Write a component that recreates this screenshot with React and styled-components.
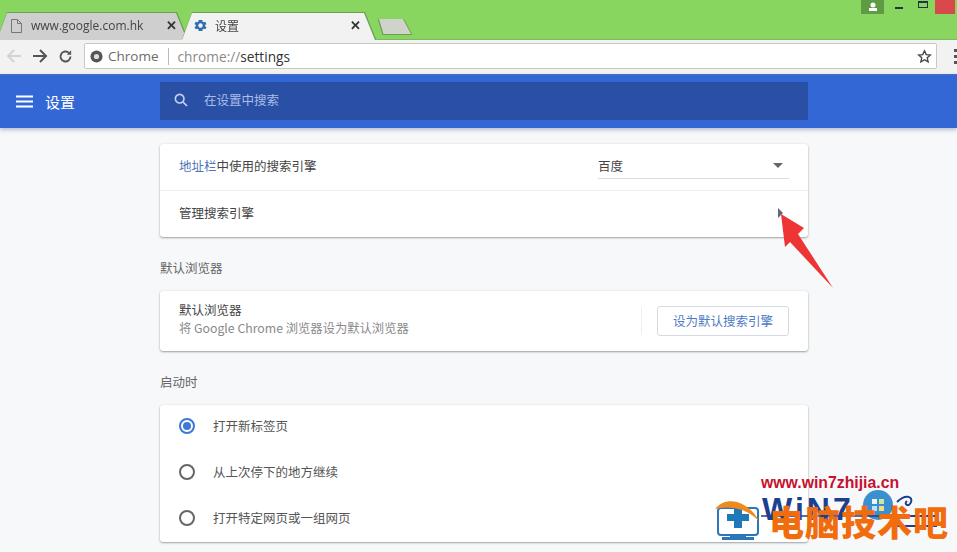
import React from "react";
import styled, { createGlobalStyle } from "styled-components";

const Global = createGlobalStyle`
  html, body { margin: 0; padding: 0; background: #f7f8fa; }
  body { font-family: "Roboto", "Noto Sans CJK SC", sans-serif; }
  * { box-sizing: border-box; }
`;
const Page = styled.div`
  position: relative; width: 957px; height: 552px; overflow: hidden;
  display: flex; flex-direction: column; background: #f7f8fa;
`;
const TabStrip = styled.div`
  position: relative; height: 40px; background: #88d65f; display: flex; align-items: flex-end;
  flex: none; border-bottom: 1px solid #7fb864;
`;
const TabWrap = styled.div`
  margin-left: ${p => p.$ml}px; margin-bottom: -1px; position: relative;
  z-index: ${p => p.$active ? 2 : 1}; flex: none;
  filter: drop-shadow(0 -1px 0 #6d9f56) drop-shadow(1px 0 0 #6d9f56);
`;
const TabShape = styled.div`
  height: 27px; width: ${p => p.$w}px;
  display: flex; align-items: center; padding: 0 ${p => p.$pr}px 2px ${p => p.$pl}px;
  background: ${p => p.$active ? "#f2f2f2" : "#cfcfcf"};
  clip-path: polygon(0 100%, 10px 0, calc(100% - 11px) 0, 100% 100%);
`;
const TabTitle = styled.span`
  flex: 1; font: 12px "Open Sans", "Noto Sans CJK SC", sans-serif; color: #444;
  white-space: nowrap;
`;
const TabIconSlot = styled.span`
  display: flex; width: 15px; height: 16px; margin-right: 7px; align-items: center; justify-content: center;
`;
const TabClose = styled.span`
  font: bold 13px "Liberation Sans", sans-serif; color: #333; line-height: 1;
`;
const NewTabWrap = styled.div`
  margin: 0 0 5px 4px; flex: none;
  filter: drop-shadow(0 1px 0 #6d9f56) drop-shadow(-1px 0 0 #6d9f56) drop-shadow(1px 0 0 #6d9f56);
`;
const NewTab = styled.div`
  width: 32px; height: 15px; background: #cfd3cb;
  clip-path: polygon(0 0, 75% 0, 100% 100%, 14% 100%);
`;
const WindowControls = styled.div`
  position: absolute; top: 0; left: 861px; display: flex; align-items: flex-start;
`;
const Avatar = styled.div`
  width: 23px; height: 14px; background: #5f9a45; display: flex; align-items: center; justify-content: center;
`;
const MinBtn = styled.div`
  width: 8px; height: 2px; background: #234; margin: 7px 0 0 11px;
`;
const MaxBtn = styled.div`
  width: 10px; height: 7px; border: 1px solid #234; border-top-width: 2px; margin: 1px 0 0 15px;
`;
const CloseBtn = styled.div`
  width: 20px; height: 14px; background: #d9484a; margin-left: 7px;
`;
const Toolbar = styled.div`
  height: 34px; background: #f2f2f2; display: flex; align-items: center; flex: none; padding: 0 0 2px 6px;
`;
const NavIcons = styled.div`
  display: flex; align-items: center; gap: 10px; width: 78px; flex: none;
`;
const Omnibox = styled.div`
  width: 853px; height: 26px; background: #fff; border: 1px solid #c9c9c0; border-radius: 2px;
  display: flex; align-items: center; padding: 0 4px 0 5px; flex: none;
`;
const Origin = styled.span`
  font: 13.5px "Open Sans", sans-serif; color: #6b6b6b; margin-left: 5px; padding-right: 9px;
  border-right: 1px solid #bbb; line-height: 17px;
`;
const Url = styled.span`
  font: 13.7px "Open Sans", sans-serif; color: #8a8a8a; margin-left: 9px; flex: 1;
  b { font-weight: 400; color: #333; }
`;
const Kebab = styled.div`
  margin-left: 17px; display: flex; flex-direction: column; gap: 3px; flex: none;
  i { width: 3px; height: 3px; background: #555; display: block; }
`;
const Header = styled.header`
  position: relative; z-index: 3; height: 54px; flex: none; background: #3367d6;
  border-top: 1px solid #4a6fb8; display: flex; align-items: center;
  box-shadow: 0 2px 4px rgba(60,80,140,.35);
`;
const Brand = styled.div`
  width: 160px; flex: none; display: flex; align-items: center; padding-left: 16px; gap: 12px;
  color: #fff; font-size: 15px; font-family: "Noto Sans CJK SC", sans-serif;
`;
const SearchBar = styled.div`
  width: 648px; height: 38px; margin-top: -2px; background: #2a50a6; display: flex; align-items: center;
  padding: 0 0 2px 13px; gap: 15px; color: #a9bde6; font: 12.5px "Noto Sans CJK SC", sans-serif;
`;
const Main = styled.main`
  flex: 1; overflow: hidden; display: flex; flex-direction: column; padding: 16px 0 0 160px;
`;
const Content = styled.div`
  width: 648px; display: flex; flex-direction: column;
`;
const SectionTitle = styled.div`
  font: 12.5px/16px "Noto Sans CJK SC", sans-serif; color: #666; height: 16px; margin: 23px 0 15px;
`;
const Card = styled.section`
  background: #fff; border-radius: 3px;
  box-shadow: 0 1px 2px rgba(60,64,67,.45), 0 0 3px rgba(60,64,67,.08);
`;
const Row = styled.div`
  height: ${p => p.$h || 46}px; display: flex; align-items: center; padding: 0 19px ${p => p.$pb ?? 3}px;
  border-top: ${p => p.$divider ? "1px solid #eeeeee" : "none"};
  font: 12.5px "Noto Sans CJK SC", sans-serif; color: #444;
`;
const RowLabel = styled.div`
  flex: 1; a { color: #4f73b8; text-decoration: none; }
`;
const Select = styled.div`
  width: 191px; height: 25px; border-bottom: 1px solid #ddd; display: flex; align-items: center;
  justify-content: space-between; margin-top: 1px; padding: 0 6px 0 0;
`;
const Caret = styled.span`
  width: 0; height: 0; border-left: 5px solid transparent; border-right: 5px solid transparent;
  border-top: 5px solid #666;
`;
const SubArrow = styled.span`
  width: 0; height: 0; border-top: 5px solid transparent; border-bottom: 5px solid transparent;
  border-left: 5px solid #667; margin-right: 6px;
`;
const Stack = styled.div`
  flex: 1; line-height: 19px;
`;
const Secondary = styled.div`
  color: #8a8a8a; font-size: 12.3px;
`;
const VLine = styled.div`
  width: 1px; height: 28px; background: #eee; margin: 5px 15px 0 0;
`;
const OutlineButton = styled.button`
  width: 132px; height: 30px; border: 1px solid #d6dbe3; border-radius: 3px; background: #fff;
  color: #4f7ac4; font: 12.5px "Noto Sans CJK SC", sans-serif; padding: 0 0 2px; margin-top: 5px;
`;
const RadioRow = styled.div`
  height: 46px; display: flex; align-items: center; padding: 0 0 4px 19px; gap: 18px;
  font: 12.5px "Noto Sans CJK SC", sans-serif; color: #555;
  &:last-child { height: 45px; padding-bottom: 3px; }
`;
const Radio = styled.span`
  width: 16px; height: 16px; border-radius: 50%; border: 2px solid ${p => p.$on ? "#3b78d8" : "#666"};
  display: flex; align-items: center; justify-content: center; flex: none;
  &::after { content: ""; width: 8px; height: 8px; border-radius: 50%; background: ${p => p.$on ? "#3b78d8" : "transparent"}; }
`;
const RadioLabel = styled.span`
  padding-bottom: 2px;
`;
const RedArrow = styled.svg`
  position: absolute; left: 778px; top: 214px; z-index: 5;
`;
const Watermark = styled.div`
  position: absolute; left: 715px; top: 474px; width: 242px; height: 78px; z-index: 6;
`;
const WmUrl = styled.div`
  position: absolute; left: 46px; top: 0; font: bold 15.8px "Liberation Sans", sans-serif; color: #c8102e;
  white-space: nowrap;
`;
const WmWin = styled.div`
  position: absolute; left: 47px; top: 18px; font: 900 32px/34px "Liberation Sans", sans-serif; color: #1d3f8f;
  letter-spacing: 3px;
`;
const WmOrange = styled.div`
  position: absolute; left: 54px; top: 25px; font: 900 35px/44px "Noto Sans CJK SC", sans-serif; color: #f06c0c;
  white-space: nowrap; letter-spacing: 1px;
`;
const WmArt = styled.svg`
  position: absolute; left: 0; top: 0;
`;

const Gear = () => (
  <svg width="15" height="15" viewBox="0 0 24 24"><path fill="#2f6fb0" d="M19.4 13a7.5 7.5 0 0 0 0-2l2.1-1.6-2-3.5-2.5 1a7.6 7.6 0 0 0-1.7-1L15 3.2h-6l-.4 2.700a7.600 7.600 0 0 0-1.700 1l-2.500-1-2 3.500L4.500 11a7.500 7.500 0 0 0 0 2l-2.100 1.600 2 3.500 2.500-1a7.600 7.600 0 0 0 1.700 1l.4 2.700h6l.4-2.700a7.600 7.600 0 0 0 1.700-1l2.500 1 2-3.500zM12 15.500a3.500 3.500 0 1 1 0-7 3.500 3.500 0 0 1 0 7z"/></svg>
);
const Doc = () => (
  <svg width="11" height="14" viewBox="0 0 11 14"><path fill="none" stroke="#777" d="M.5.5h6l4 4v9H.5zM6.500.5v4h4"/></svg>
);

export default function App() {
  return (
    <Page>
      <Global />
      <TabStrip>
        <TabWrap $ml={-3}>
          <TabShape $w={190} $pl={12} $pr={10}>
            <TabIconSlot><Doc /></TabIconSlot>
            <TabTitle>www.google.com.hk</TabTitle>
            <TabClose>✕</TabClose>
          </TabShape>
        </TabWrap>
        <TabWrap $active $ml={-5}>
          <TabShape $active $w={193} $pl={11} $pr={14}>
            <TabIconSlot><Gear /></TabIconSlot>
            <TabTitle>设置</TabTitle>
            <TabClose>✕</TabClose>
          </TabShape>
        </TabWrap>
        <NewTabWrap><NewTab /></NewTabWrap>
        <WindowControls>
          <Avatar>
            <svg width="10" height="10" viewBox="0 0 10 10"><circle cx="5" cy="3" r="2.500" fill="#fff"/><rect x="1" y="6" width="8" height="3" fill="#fff"/></svg>
          </Avatar>
          <MinBtn />
          <MaxBtn />
          <CloseBtn />
        </WindowControls>
      </TabStrip>
      <Toolbar>
        <NavIcons>
          <svg width="16" height="14" viewBox="0 0 16 14"><path d="M8 1 2 7l6 6M2 7h13" fill="none" stroke="#d2d2d2" strokeWidth="2"/></svg>
          <svg width="16" height="14" viewBox="0 0 16 14"><path d="m8 1 6 6-6 6M14 7H1" fill="none" stroke="#555" strokeWidth="2"/></svg>
          <svg width="15" height="15" viewBox="0 0 24 24"><path d="M20 12a8 8 0 1 1-2.300-5.700" fill="none" stroke="#555" strokeWidth="3"/><path d="M21 2v7h-7z" fill="#555"/></svg>
        </NavIcons>
        <Omnibox>
          <svg width="13" height="13" viewBox="0 0 14 14"><circle cx="7" cy="7" r="6.500" fill="#555"/><circle cx="7" cy="7" r="2.800" fill="#ddd"/></svg>
          <Origin>Chrome</Origin>
          <Url>chrome://<b>settings</b></Url>
          <svg width="15" height="15" viewBox="0 0 24 24"><path d="m12 3 2.800 6 6.500.7-4.900 4.400 1.400 6.400L12 17.200 6.200 20.500l1.400-6.400-4.900-4.400 6.500-.7z" fill="none" stroke="#444" strokeWidth="2.200"/></svg>
        </Omnibox>
        <Kebab><i /><i /><i /></Kebab>
      </Toolbar>
      <Header>
        <Brand>
          <svg width="17" height="13" viewBox="0 0 17 13"><path d="M0 1.500h17M0 6.500h17M0 11.500h17" stroke="#fff" strokeWidth="2"/></svg>
          设置
        </Brand>
        <SearchBar>
          <svg width="16" height="16" viewBox="0 0 24 24"><circle cx="10" cy="10" r="6.500" fill="none" stroke="#c4d3f0" strokeWidth="2.400"/><path d="m15 15 6 6" stroke="#c4d3f0" strokeWidth="2.600"/></svg>
          在设置中搜索
        </SearchBar>
      </Header>
      <Main>
        <Content>
          <Card>
            <Row>
              <RowLabel><a>地址栏</a>中使用的搜索引擎</RowLabel>
              <Select>百度<Caret /></Select>
            </Row>
            <Row $divider $h={47}>
              <RowLabel>管理搜索引擎</RowLabel>
              <SubArrow />
            </Row>
          </Card>
          <SectionTitle>默认浏览器</SectionTitle>
          <Card>
            <Row $h={60} $pb={5}>
              <Stack>
                默认浏览器
                <Secondary>将 Google Chrome 浏览器设为默认浏览器</Secondary>
              </Stack>
              <VLine />
              <OutlineButton>设为默认搜索引擎</OutlineButton>
            </Row>
          </Card>
          <SectionTitle>启动时</SectionTitle>
          <Card>
            <RadioRow><Radio $on /><RadioLabel>打开新标签页</RadioLabel></RadioRow>
            <RadioRow><Radio /><RadioLabel>从上次停下的地方继续</RadioLabel></RadioRow>
            <RadioRow><Radio /><RadioLabel>打开特定网页或一组网页</RadioLabel></RadioRow>
          </Card>
        </Content>
      </Main>
      <RedArrow width="60" height="80" viewBox="0 0 60 80">
        <path d="M3 0 L26 14 L20 20 L55 74 L12 28 L7 33 Z" fill="#ee3535" />
      </RedArrow>
      <Watermark>
        <WmUrl>www.win7zhijia.cn</WmUrl>
        <WmWin>WiN7</WmWin>
        <WmArt width="242" height="78" viewBox="0 0 242 78">
          <circle cx="163" cy="31" r="15" fill="#3a8fd0" />
          <rect x="157" y="25" width="5" height="5" fill="#e9f4fb" />
          <rect x="164" y="25" width="5" height="5" fill="#cfe8a0" />
          <rect x="157" y="32" width="5" height="5" fill="#bfe0f5" />
          <rect x="164" y="32" width="5" height="5" fill="#f5dc80" />
          <path d="M182 28c8-8 16-6 14 0s-8 2-4-1M180 42h42M172 52h50" fill="none" stroke="#1d3f8f" strokeWidth="2" />
          <path d="M46 42h130" stroke="#1d3f8f" strokeWidth="1.500" />
          <rect x="3" y="34" width="40" height="27" rx="3" fill="#fff" stroke="#2a78b8" strokeWidth="2" />
          <path d="M19 36h8v7h7v7h-7v7h-8v-7h-7v-7h7z" fill="#1f78b8" transform="translate(0 -3)" />
          <path d="M15 61h16v2h8v3H7v-3h8z" fill="#2a78b8" />
          <path d="M0 35c10-13 32-10 44 12-12-12-28-16-44-12z" fill="#f08a1c" />
        </WmArt>
        <WmOrange>电脑技术吧</WmOrange>
      </Watermark>
    </Page>
  );
}
